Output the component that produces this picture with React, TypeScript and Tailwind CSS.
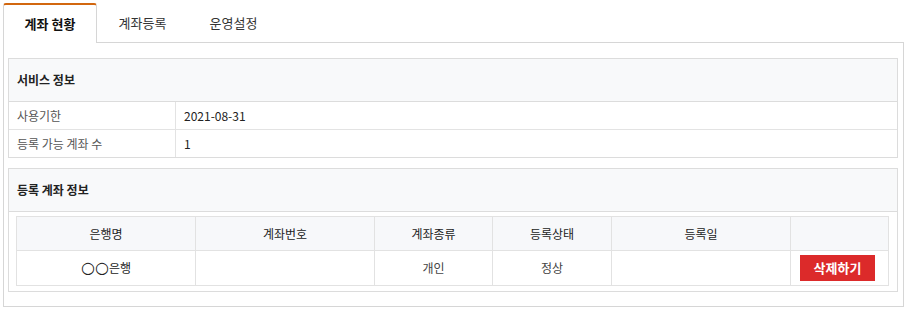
const tabs = [
  { label: "계좌 현황", active: true },
  { label: "계좌등록", active: false },
  { label: "운영설정", active: false },
];

const serviceRows = [
  { label: "사용기한", value: "2021-08-31" },
  { label: "등록 가능 계좌 수", value: "1" },
];

const columns = ["은행명", "계좌번호", "계좌종류", "등록상태", "등록일", ""];
const colWidths = ["w-[179px]", "w-[179px]", "w-[118px]", "w-[119px]", "w-[179px]", ""];

export default function App() {
  return (
    <div
      className="p-[3px] bg-white text-[12px] text-[#333]"
      style={{ fontFamily: '"Noto Sans CJK KR", "Noto Sans", sans-serif' }}
    >
      {/* tabs */}
      <div className="flex h-[40px] border-b border-[#d6d6d6]">
        {tabs.map((tab) =>
          tab.active ? (
            <div
              key={tab.label}
              className="w-[94px] -mb-px flex items-center justify-center rounded-t-[3px] border-x border-t-2 border-x-[#d6d6d6] border-t-[#d2670f] bg-white text-[13px] font-bold text-[#111]"
            >
              {tab.label}
            </div>
          ) : (
            <div
              key={tab.label}
              className="w-[91px] flex items-center justify-center text-[13px] text-[#333]"
            >
              {tab.label}
            </div>
          )
        )}
      </div>

      <div className="border-x border-b border-[#d6d6d6] pt-[15px] pb-[14px] pl-[4px] pr-[5px] flex flex-col gap-[10px]">
        {/* service info */}
        <div className="border border-[#dcdcdc]">
          <div className="h-[43px] flex items-center px-[8px] bg-[#f8f9fa] border-b border-[#dcdcdc] font-bold text-[#222]">
            서비스 정보
          </div>
          {serviceRows.map((row, i) => (
            <div
              key={row.label}
              className={[
                "flex",
                i < serviceRows.length - 1 ? "h-[28px] border-b border-[#e3e3e3]" : "h-[27px]",
              ].join(" ")}
            >
              <div className="w-[167px] flex items-center px-[8px] border-r border-[#e3e3e3] text-[#555]">
                {row.label}
              </div>
              <div className="flex-1 flex items-center px-[8px] text-[#222]">{row.value}</div>
            </div>
          ))}
        </div>

        {/* registered accounts */}
        <div className="border border-[#dcdcdc] pb-[5px]">
          <div className="h-[43px] flex items-center px-[8px] bg-[#f8f9fa] border-b border-[#dcdcdc] font-bold text-[#222]">
            등록 계좌 정보
          </div>
          <div className="pt-[4px] pl-[7px] pr-[8px]">
            <table className="w-full border-collapse table-fixed">
              <thead>
                <tr className="h-[34px] bg-[#f7f8fa]">
                  {columns.map((c, i) => (
                    <th
                      key={i}
                      className={`${colWidths[i]} border border-[#e2e2e2] font-normal text-[#222] p-0`}
                    >
                      {c}
                    </th>
                  ))}
                </tr>
              </thead>
              <tbody>
                <tr className="h-[35px] text-center">
                  <td className="border border-[#e2e2e2] text-[#222] p-0">
                    <span
                      className="text-[16px] leading-none"
                      style={{ fontFamily: '"DejaVu Sans", sans-serif' }}
                    >
                      ○○
                    </span>
                    은행
                  </td>
                  <td className="border border-[#e2e2e2] p-0"></td>
                  <td className="border border-[#e2e2e2] text-[#444] p-0">개인</td>
                  <td className="border border-[#e2e2e2] text-[#444] p-0">정상</td>
                  <td className="border border-[#e2e2e2] p-0"></td>
                  <td className="border border-[#e2e2e2] p-0 text-left pl-[9px]">
                    <button className="w-[75px] h-[26px] bg-[#dc2a2a] text-white text-[13px] font-bold align-middle">
                      삭제하기
                    </button>
                  </td>
                </tr>
              </tbody>
            </table>
          </div>
        </div>
      </div>
    </div>
  );
}
